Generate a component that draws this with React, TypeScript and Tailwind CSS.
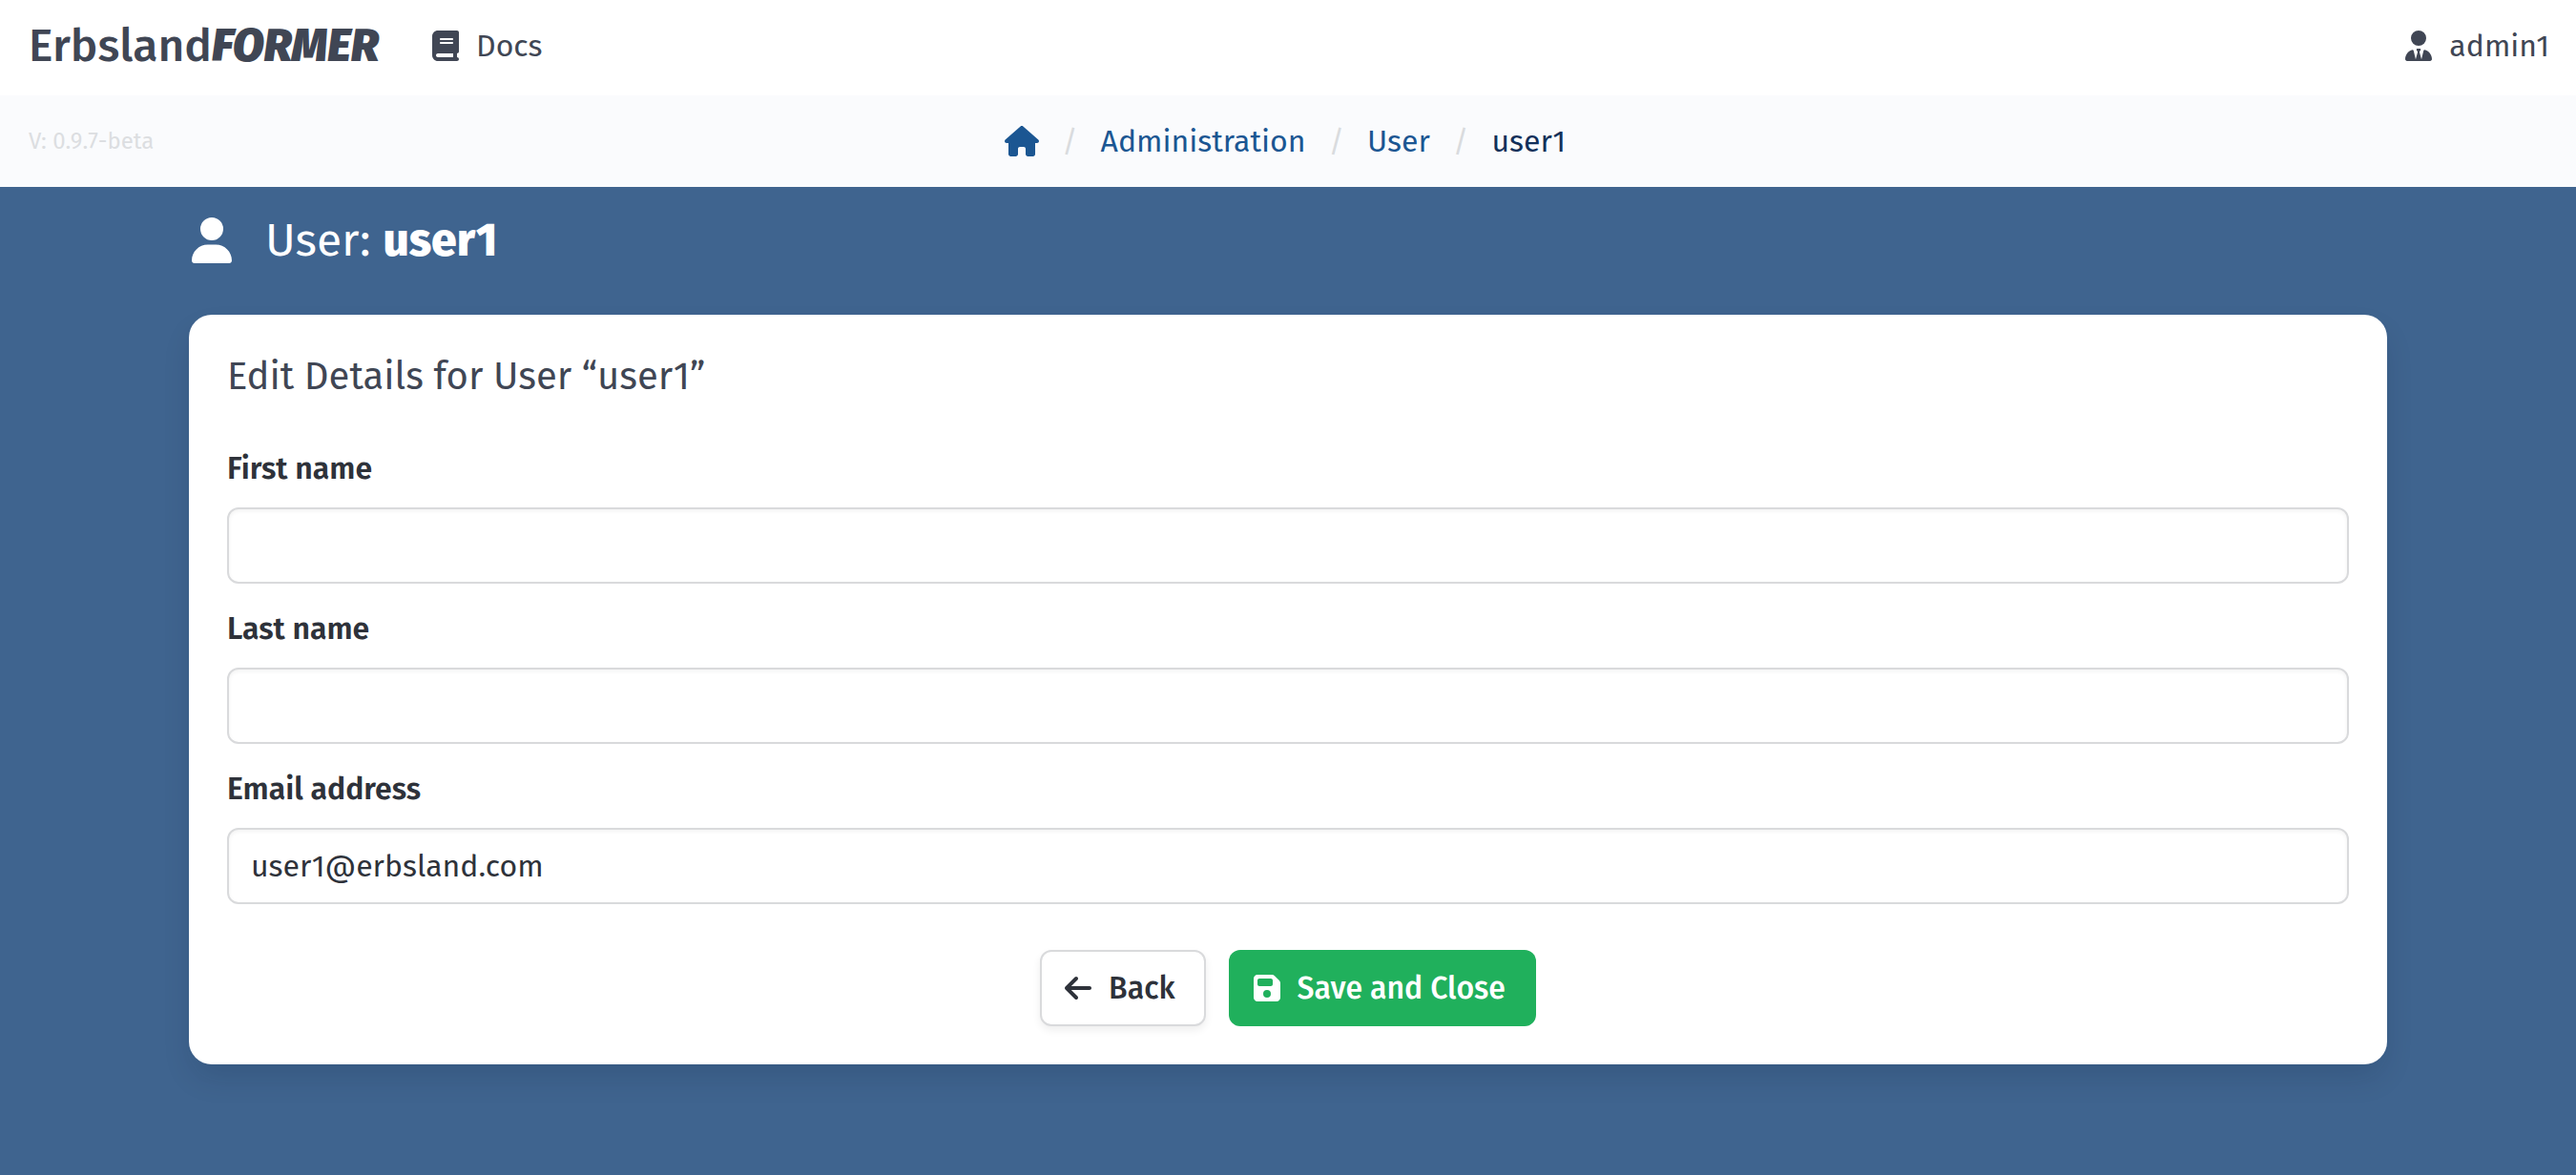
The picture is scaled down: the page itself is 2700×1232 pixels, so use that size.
import { FaArrowLeft, FaBook, FaFloppyDisk, FaHouse, FaUser, FaUserTie } from "react-icons/fa6";

const fields = [
  { id: "first-name", label: "First name", type: "text", value: "" },
  { id: "last-name", label: "Last name", type: "text", value: "" },
  { id: "email", label: "Email address", type: "email", value: "user1@erbsland.com" },
];

function Navbar() {
  return (
    <header className="flex h-[100px] items-center justify-between bg-white pr-7 pb-1 pl-[30px] text-[#404654]">
      <div className="flex items-center gap-14">
        <a href="#" className="text-5xl font-medium">
          Erbsland<span className="font-black italic">FORMER</span>
        </a>
        <a href="#docs" className="flex items-center gap-[18px]">
          <FaBook className="h-8 w-7" />
          Docs
        </a>
      </div>
      <a href="#account" className="flex items-center gap-[18px]">
        <FaUserTie className="h-8 w-7" />
        admin1
      </a>
    </header>
  );
}

function Slash() {
  return (
    <span aria-hidden="true" className="px-6 text-[#d9dbde]">
      /
    </span>
  );
}

function Breadcrumb() {
  return (
    <div className="grid h-24 grid-cols-[1fr_auto_1fr] items-center bg-[#fafbfd] pr-9 pl-[30px]">
      <span className="text-2xl text-[#dcdee1]">V: 0.9.7-beta</span>
      <nav aria-label="breadcrumb" className="flex items-center text-[#1b5692]">
        <a href="#home" aria-label="Home">
          <FaHouse className="h-8 w-9" />
        </a>
        <Slash />
        <a href="#administration">Administration</a>
        <Slash />
        <a href="#user">User</a>
        <Slash />
        <a href="#user1" aria-current="page" className="text-[#12305a]">
          user1
        </a>
      </nav>
    </div>
  );
}

export default function App() {
  return (
    <div className="min-h-screen bg-[#3f648f] font-['Fira_Sans','Roboto',sans-serif] text-[32px] leading-[48px]">
      <Navbar />
      <Breadcrumb />
      <main className="mx-auto w-full max-w-[2304px] pt-8">
        <h1 className="mb-[54px] flex h-12 items-center gap-8 text-5xl font-normal text-white">
          <FaUser className="h-12 w-12" />
          <span>
            User: <strong className="font-extrabold">user1</strong>
          </span>
        </h1>
        <form
          onSubmit={(e) => e.preventDefault()}
          className="rounded-3xl bg-white p-10 shadow-[0_16px_32px_-4px_rgba(10,20,40,0.14)]"
        >
          <h2 className="mb-12 text-[40px] leading-[50px] text-[#404654]">Edit Details for User “user1”</h2>
          <div className="flex flex-col gap-6">
            {fields.map((f) => (
              <div key={f.id} className="flex flex-col gap-[18px]">
                <label htmlFor={f.id} className="leading-[46px] font-semibold text-[#2e323a]">
                  {f.label}
                </label>
                <input
                  id={f.id}
                  type={f.type}
                  defaultValue={f.value}
                  className="h-20 w-full rounded-xl border-2 border-[#d9dadc] bg-white px-[23px] text-[#2e323a] shadow-[inset_0_2px_4px_rgba(10,10,10,0.05)] outline-none"
                />
              </div>
            ))}
          </div>
          <div className="mt-12 flex justify-center gap-6 font-medium">
            <button
              type="button"
              className="flex h-20 items-center gap-[18px] rounded-xl border-2 border-[#d9dadc] bg-white pr-[30px] pl-6 text-[#2e323a] shadow-[0_4px_8px_rgba(10,10,10,0.07)]"
            >
              <FaArrowLeft className="h-8 w-7" />
              Back
            </button>
            <button type="submit" className="flex h-20 items-center gap-[18px] rounded-xl bg-[#20b05c] pr-8 pl-[26px] text-white">
              <FaFloppyDisk className="h-8 w-7" />
              Save and Close
            </button>
          </div>
        </form>
      </main>
    </div>
  );
}
